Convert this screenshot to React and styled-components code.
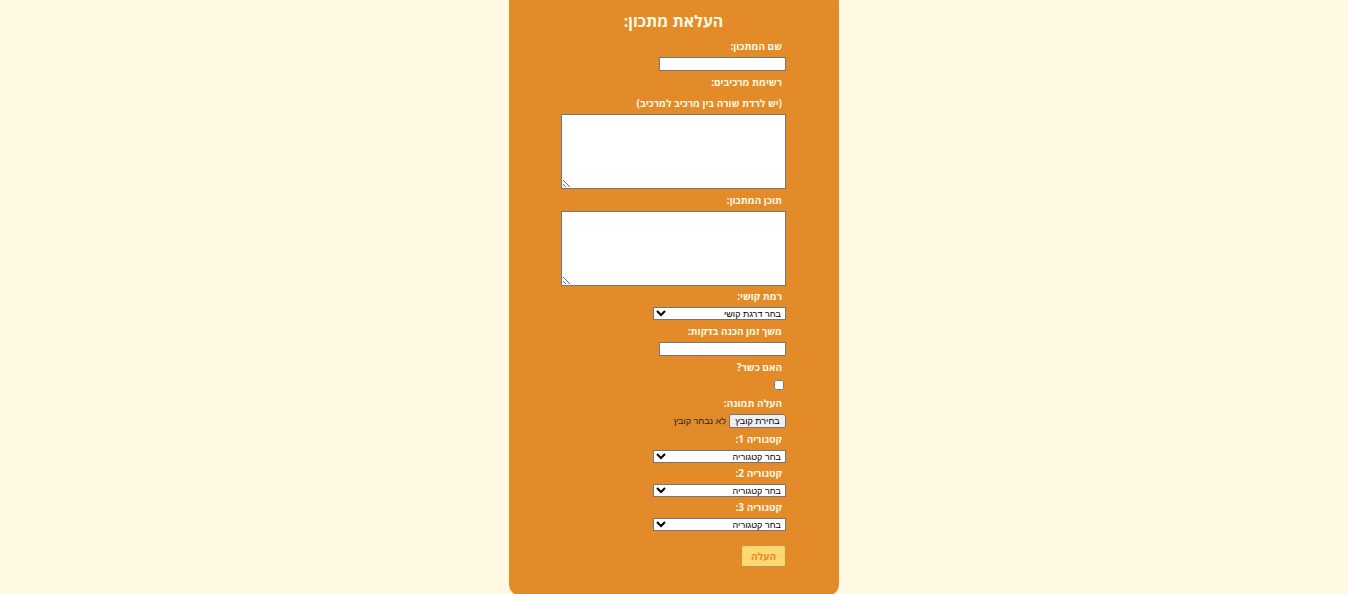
import React, { useState } from "react";
import styled, { createGlobalStyle } from "styled-components";

const GlobalStyle = createGlobalStyle`
  *, *::before, *::after { box-sizing: border-box; }
  body {
    margin: 0;
    background: #fff8e3;
    font-family: "Open Sans", "DejaVu Sans", sans-serif;
  }
`;

const Page = styled.main`
  display: flex;
  justify-content: center;
  align-items: flex-start;
  height: 100vh;
  overflow: hidden;
`;

const Card = styled.form`
  display: flex;
  flex-direction: column;
  align-items: flex-start;
  width: 100%;
  max-width: 330px;
  margin-top: -10px;
  padding: 19px 53px 29px 52px;
  border-radius: 12px;
  background: #e28b28;
  color: #fff8e3;
`;

const Title = styled.h1`
  align-self: center;
  margin: 0 0 2px;
  font-size: 16px;
  line-height: 24px;
  font-weight: 700;
`;

const Field = styled.div`
  display: flex;
  flex-direction: column;
  align-items: flex-start;
  align-self: stretch;
`;

const Label = styled.label`
  padding-inline-start: 4px;
  font-size: 10px;
  line-height: ${(p) => (p.$tight ? 21 : 22)}px;
  font-weight: 700;
`;

const Hint = styled(Label).attrs({ as: "span", $tight: true })``;

const TextBox = styled.input`
  width: 127px;
  height: 14px;
  padding: 0 3px;
  border: 1px solid #767676;
  border-radius: 0;
  background: #fff;
  font: 9px/12px "Liberation Sans", sans-serif;
`;

const TextArea = styled.textarea`
  display: block;
  width: 100%;
  height: 75px;
  padding: 2px;
  border: 1px solid #767676;
  border-radius: 0;
  background: #fff;
  font: 9px/12px "Liberation Sans", sans-serif;
`;

const Select = styled.select`
  width: 133px;
  height: 13px;
  padding: 0;
  border: 1px solid #767676;
  border-radius: 0;
  background-color: #fff;
  color: #000;
  font: 9px/11px "Liberation Sans", sans-serif;
`;

const CheckRow = styled.div`
  display: flex;
  align-items: center;
  height: 14px;
  padding-inline-start: 2px;
`;

const CheckBox = styled.input`
  width: 10px;
  height: 10px;
  margin: 0;
`;

const FileRow = styled.div`
  position: relative;
  display: flex;
  align-items: center;
  gap: 3px;
  height: 14px;
  color: #222;
  font: 9px/12px "Liberation Sans", sans-serif;
`;

const FileInput = styled.input`
  position: absolute;
  inset: 0;
  width: 100%;
  height: 100%;
  opacity: 0;
`;

const FileButton = styled.span`
  width: 57px;
  height: 14px;
  border: 1px solid #767676;
  border-radius: 2px;
  background: #efefef;
  color: #000;
  text-align: center;
`;

const Categories = styled.div`
  align-self: stretch;
  padding-top: 1px;
`;

const Submit = styled.button`
  width: 43px;
  height: 21px;
  margin: 15px 1px 0;
  padding: 0;
  border: 0;
  border-bottom: 1px solid #a99a55;
  border-radius: 2px;
  background: #ffd773;
  color: #e28b28;
  font: 700 10px/20px "Open Sans", sans-serif;
`;

function SelectField({ id, label, placeholder }) {
  return (
    <Field>
      <Label htmlFor={id} $tight>{label}</Label>
      <Select id={id} defaultValue="">
        <option value="">{placeholder}</option>
      </Select>
    </Field>
  );
}

export default function App() {
  const [fileName, setFileName] = useState("");

  return (
    <>
      <GlobalStyle />
      <Page dir="rtl" lang="he">
        <Card onSubmit={(e) => e.preventDefault()}>
          <Title>העלאת מתכון:</Title>
          <Field>
            <Label htmlFor="name">שם המתכון:</Label>
            <TextBox id="name" type="text" />
          </Field>
          <Field>
            <Label htmlFor="ingredients">רשימת מרכיבים:</Label>
            <Hint id="ingredients-hint">(יש לרדת שורה בין מרכיב למרכיב)</Hint>
            <TextArea id="ingredients" aria-describedby="ingredients-hint" />
          </Field>
          <Field>
            <Label htmlFor="content">תוכן המתכון:</Label>
            <TextArea id="content" />
          </Field>
          <SelectField id="level" label="רמת קושי:" placeholder="בחר דרגת קושי" />
          <Field>
            <Label htmlFor="duration">משך זמן הכנה בדקות:</Label>
            <TextBox id="duration" type="text" />
          </Field>
          <Field>
            <Label htmlFor="kosher">האם כשר?</Label>
            <CheckRow>
              <CheckBox id="kosher" type="checkbox" />
            </CheckRow>
          </Field>
          <Field>
            <Label htmlFor="image">העלה תמונה:</Label>
            <FileRow>
              <FileButton>בחירת קובץ</FileButton>
              <span>{fileName || "לא נבחר קובץ"}</span>
              <FileInput
                id="image"
                type="file"
                onChange={(e) => setFileName(e.target.files[0]?.name ?? "")}
              />
            </FileRow>
          </Field>
          <Categories>
            {[1, 2, 3].map((n) => (
              <SelectField
                key={n}
                id={`category-${n}`}
                label={`קטגוריה ${n}:`}
                placeholder="בחר קטגוריה"
              />
            ))}
          </Categories>
          <Submit type="submit">העלה</Submit>
        </Card>
      </Page>
    </>
  );
}
